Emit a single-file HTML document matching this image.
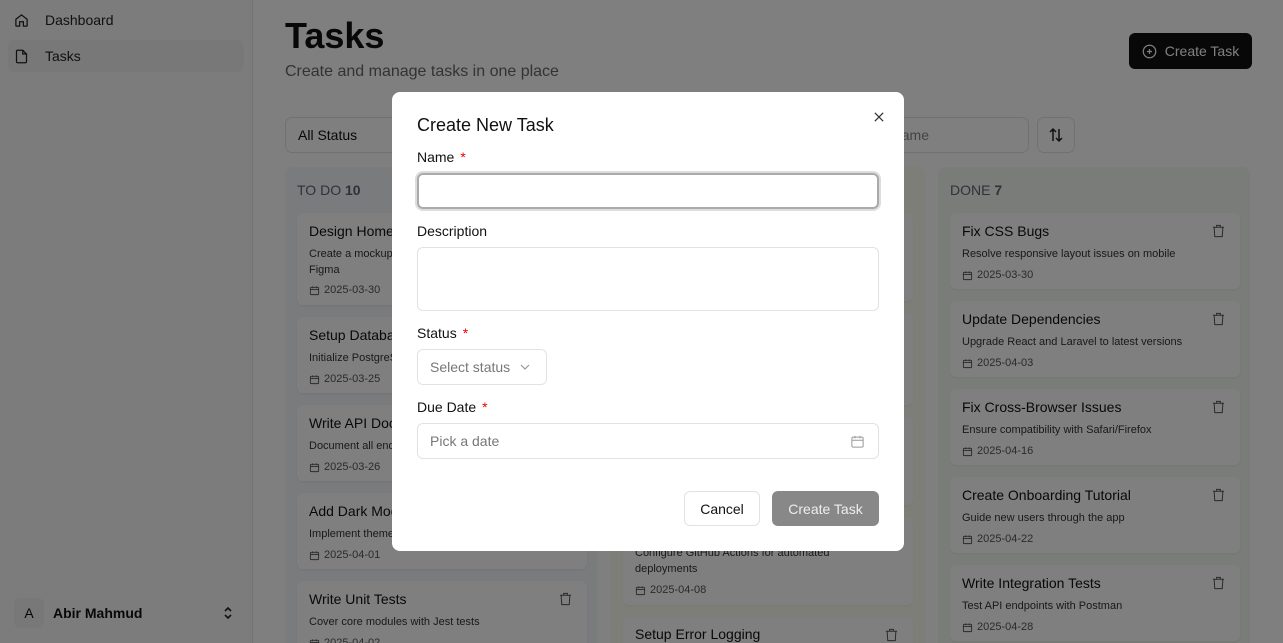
<!DOCTYPE html>
<html style="overflow:hidden;height:643px"><head><meta charset="utf-8"><style>
*{box-sizing:border-box;margin:0;padding:0}
html,body{overflow:hidden}
body{width:1283px;height:643px;font-family:"Liberation Sans",sans-serif;background:#fff;position:relative;color:#111}
.a{position:absolute}
.side{left:0;top:0;width:253px;height:643px;background:#f8f8f8;border-right:1px solid #e5e5e5}
.nav{left:8px;width:236px;height:32px;font-size:14px;display:flex;align-items:center;padding-left:37px;color:#222}
.col{top:167px;height:476px;border-radius:8px 8px 0 0}
.ch{font-size:14px;color:#5b6577}
.card{background:#fff;border-radius:6px;box-shadow:0 1px 2px rgba(0,0,0,.05);padding:9px 12px;overflow:hidden}
.card .t{font-size:14px;color:#111;margin-top:1px}
.card .d{font-size:11px;color:#333;margin-top:7px;line-height:16px}
.card .dt{font-size:11px;color:#555;margin-top:7px;display:flex;align-items:center;gap:4px}
.trash{position:absolute;right:14px;top:10px}
.ov{left:0;top:0;width:1283px;height:643px;background:rgba(0,0,0,.5)}
.modal{left:392px;top:92px;width:512px;height:459px;background:#fff;border-radius:8px}
.lbl{font-size:14px;color:#111;position:absolute;left:25px}
.lbl b{color:#e00;font-weight:normal;margin-left:6px}
.inp{position:absolute;left:25px;width:462px;border:1px solid #e2e2e2;border-radius:6px;font-size:14px;color:#777;padding-left:12px;display:flex;align-items:center}
</style></head><body>
<svg width="0" height="0" style="position:absolute"><defs>
<symbol id="cal" viewBox="0 0 24 24"><g fill="none" stroke="#555" stroke-width="2"><rect x="3" y="5" width="18" height="16" rx="2"/><path d="M3 10h18M8 3v4M16 3v4"/></g></symbol>
<symbol id="tr" viewBox="0 0 24 24"><g fill="none" stroke="#555" stroke-width="1.6"><path d="M3 6h18M9 6V3h6v3M5 6l1 15h12l1-15"/></g></symbol>
</defs></svg>
<div class="a side"></div>
<div class="a nav" style="top:4px"><svg class="a" style="left:6px;top:9px" width="15" height="15" viewBox="0 0 24 24" fill="none" stroke="#222" stroke-width="2"><path d="M3 10l9-7 9 7v10a1 1 0 0 1-1 1h-5v-7h-6v7H4a1 1 0 0 1-1-1z"/></svg>Dashboard</div>
<div class="a nav" style="top:40px;background:#f0f0f0;border-radius:6px"><svg class="a" style="left:6px;top:9px" width="15" height="15" viewBox="0 0 24 24" fill="none" stroke="#222" stroke-width="2"><path d="M14 2H6a2 2 0 0 0-2 2v16a2 2 0 0 0 2 2h12a2 2 0 0 0 2-2V8z"/><path d="M14 2v6h6"/></svg>Tasks</div>
<div class="a" style="left:14px;top:598px;width:30px;height:30px;border-radius:6px;background:#f0f0f0;font-size:14px;display:flex;align-items:center;justify-content:center">A</div>
<div class="a" style="left:53px;top:605px;font-size:14px;font-weight:bold">Abir Mahmud</div>
<svg class="a" style="left:222px;top:606px" width="12" height="14" viewBox="0 0 12 14" fill="none" stroke="#222" stroke-width="1.6"><path d="M3 5l3-3 3 3M3 9l3 3 3-3"/></svg>

<div class="a" style="left:285px;top:15px;font-size:36px;font-weight:bold">Tasks</div>
<div class="a" style="left:285px;top:63px;font-size:16px;color:#666">Create and manage tasks in one place</div>
<div class="a" style="left:1129px;top:33px;width:123px;height:36px;background:#111;border-radius:6px;color:#fff;font-size:14px;display:flex;align-items:center;justify-content:center;gap:8px"><svg width="15" height="15" viewBox="0 0 24 24" fill="none" stroke="#fff" stroke-width="2"><circle cx="12" cy="12" r="10"/><path d="M8 12h8M12 8v8"/></svg>Create Task</div>
<div class="a" style="left:285px;top:117px;width:320px;height:36px;border:1px solid #e2e2e2;border-radius:7px;font-size:14px;padding:9px 12px">All Status</div>
<div class="a" style="left:700px;top:117px;width:329px;height:36px;border:1px solid #e2e2e2;border-radius:7px;font-size:14px;padding:9px 12px;color:#888;text-align:right;padding-right:99px">Search by name</div>
<div class="a" style="left:1037px;top:117px;width:38px;height:36px;border:1px solid #e2e2e2;border-radius:7px;display:flex;align-items:center;justify-content:center"><svg width="18" height="18" viewBox="0 0 24 24" fill="none" stroke="#222" stroke-width="2"><path d="M8 20V4M4 8l4-4 4 4M16 4v16M12 16l4 4 4-4"/></svg></div>

<div class="a col" style="left:285px;width:312px;background:#f3f6f9"></div>
<div class="a col" style="left:611px;width:314px;background:#fcfcf1"></div>
<div class="a col" style="left:938px;width:312px;background:#f3f8f3"></div>
<div class="a ch" style="left:297px;top:182px">TO DO <b>10</b></div>
<div class="a ch" style="left:950px;top:182px">DONE <b>7</b></div>

<div class="a card" style="left:297px;top:213px;width:290px;height:92px"><div class="t">Design Homepage</div><div class="d">Create a mockup of the homepage design in<br>Figma</div><div class="dt" style="margin-top:6px"><svg width="11" height="11"><use href="#cal"/></svg> 2025-03-30</div></div>
<div class="a card" style="left:297px;top:317px;width:290px;height:76px"><div class="t">Setup Database</div><div class="d">Initialize PostgreSQL database</div><div class="dt"><svg width="11" height="11"><use href="#cal"/></svg> 2025-03-25</div></div>
<div class="a card" style="left:297px;top:405px;width:290px;height:76px"><div class="t">Write API Docs</div><div class="d">Document all endpoints</div><div class="dt"><svg width="11" height="11"><use href="#cal"/></svg> 2025-03-26</div></div>
<div class="a card" style="left:297px;top:493px;width:290px;height:76px"><div class="t">Add Dark Mode</div><div class="d">Implement theme switching</div><div class="dt"><svg width="11" height="11"><use href="#cal"/></svg> 2025-04-01</div></div>
<div class="a card" style="left:297px;top:581px;width:290px;height:62px;border-radius:6px 6px 0 0"><div class="t">Write Unit Tests</div><div class="d">Cover core modules with Jest tests</div><div class="dt"><svg width="11" height="11"><use href="#cal"/></svg> 2025-04-02</div><svg class="trash" width="15" height="16"><use href="#tr"/></svg></div>

<div class="a card" style="left:623px;top:213px;width:290px;height:88px"></div>
<div class="a card" style="left:623px;top:313px;width:290px;height:92px"></div>
<div class="a card" style="left:623px;top:417px;width:290px;height:88px"></div>
<div class="a card" style="left:623px;top:517px;width:290px;height:88px;padding-top:21px"><div class="d">Configure GitHub Actions for automated<br>deployments</div><div class="dt"><svg width="11" height="11"><use href="#cal"/></svg> 2025-04-08</div></div>
<div class="a card" style="left:623px;top:617px;width:290px;height:26px;border-radius:6px 6px 0 0"><div class="t" style="margin-top:0">Setup Error Logging</div><svg class="trash" width="15" height="16"><use href="#tr"/></svg></div>

<div class="a card" style="left:950px;top:213px;width:290px;height:76px"><div class="t">Fix CSS Bugs</div><div class="d">Resolve responsive layout issues on mobile</div><div class="dt"><svg width="11" height="11"><use href="#cal"/></svg> 2025-03-30</div><svg class="trash" width="15" height="16"><use href="#tr"/></svg></div>
<div class="a card" style="left:950px;top:301px;width:290px;height:76px"><div class="t">Update Dependencies</div><div class="d">Upgrade React and Laravel to latest versions</div><div class="dt"><svg width="11" height="11"><use href="#cal"/></svg> 2025-04-03</div><svg class="trash" width="15" height="16"><use href="#tr"/></svg></div>
<div class="a card" style="left:950px;top:389px;width:290px;height:76px"><div class="t">Fix Cross-Browser Issues</div><div class="d">Ensure compatibility with Safari/Firefox</div><div class="dt"><svg width="11" height="11"><use href="#cal"/></svg> 2025-04-16</div><svg class="trash" width="15" height="16"><use href="#tr"/></svg></div>
<div class="a card" style="left:950px;top:477px;width:290px;height:76px"><div class="t">Create Onboarding Tutorial</div><div class="d">Guide new users through the app</div><div class="dt"><svg width="11" height="11"><use href="#cal"/></svg> 2025-04-22</div><svg class="trash" width="15" height="16"><use href="#tr"/></svg></div>
<div class="a card" style="left:950px;top:565px;width:290px;height:76px"><div class="t">Write Integration Tests</div><div class="d">Test API endpoints with Postman</div><div class="dt"><svg width="11" height="11"><use href="#cal"/></svg> 2025-04-28</div><svg class="trash" width="15" height="16"><use href="#tr"/></svg></div>

<div class="a ov"></div>
<div class="a modal">
  <div class="a" style="left:25px;top:23px;font-size:18px;color:#111">Create New Task</div>
  <svg class="a" style="left:482px;top:20px" width="10" height="10" viewBox="0 0 12 12" stroke="#333" stroke-width="1.5"><path d="M1 1l10 10M11 1L1 11"/></svg>
  <div class="lbl" style="top:57px">Name<b>*</b></div>
  <div class="inp" style="top:81px;height:36px;border:2px solid #aaa;box-shadow:0 0 0 2px #ddd"></div>
  <div class="lbl" style="top:131px">Description</div>
  <div class="inp" style="top:155px;height:64px"></div>
  <div class="lbl" style="top:233px">Status<b>*</b></div>
  <div class="inp" style="top:257px;height:36px;width:130px">Select status <svg style="margin-left:10px" width="10" height="6" viewBox="0 0 10 6" fill="none" stroke="#999" stroke-width="1.2"><path d="M1 1l4 4 4-4"/></svg></div>
  <div class="lbl" style="top:307px">Due Date<b>*</b></div>
  <div class="inp" style="top:331px;height:36px">Pick a date<svg class="a" style="right:13px;top:10px" width="15" height="15" viewBox="0 0 24 24" fill="none" stroke="#999" stroke-width="1.6"><rect x="3" y="5" width="18" height="16" rx="2"/><path d="M3 10h18M8 3v4M16 3v4"/></svg></div>
  <div class="a" style="left:292px;top:399px;width:76px;height:35px;border:1px solid #e2e2e2;border-radius:6px;font-size:14px;display:flex;align-items:center;justify-content:center">Cancel</div>
  <div class="a" style="left:380px;top:399px;width:107px;height:35px;background:#888;border-radius:6px;font-size:14px;color:#eee;display:flex;align-items:center;justify-content:center">Create Task</div>
</div>
</body></html>
